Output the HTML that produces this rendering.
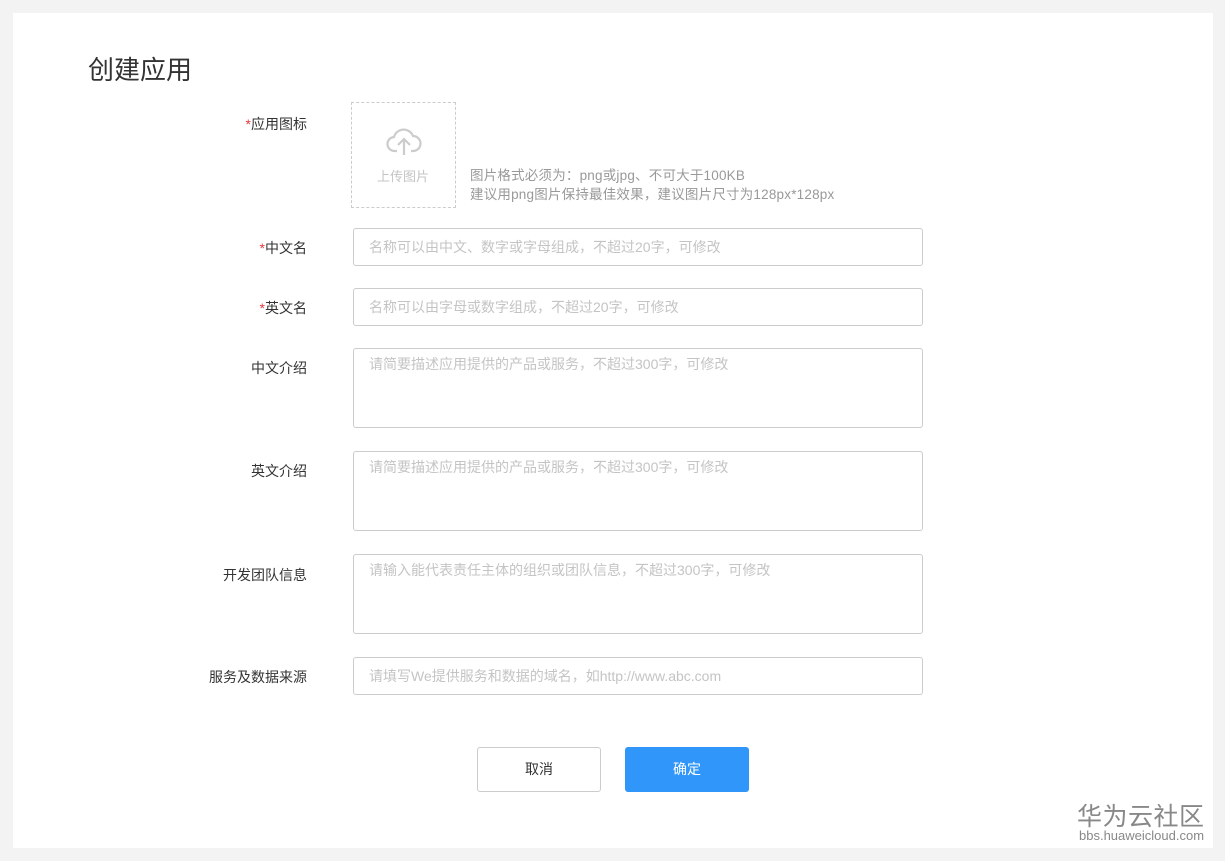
<!DOCTYPE html>
<html><head><meta charset="utf-8"><style>
*{margin:0;padding:0;box-sizing:border-box}
body{width:1225px;height:861px;background:#f3f3f3;font-family:"Liberation Sans","Noto Sans CJK SC",sans-serif;position:relative;overflow:hidden}
.card{position:absolute;left:13px;top:13px;width:1200px;height:835px;background:#fff}
.a{position:absolute}
h1{position:absolute;left:88px;top:50px;font-size:26px;font-weight:normal;color:#333}
.lbl{position:absolute;right:918px;font-size:14px;color:#333;white-space:nowrap}
.lbl i{color:#e4393c;font-style:normal}
.in{position:absolute;left:353px;width:570px;border:1px solid #ccc;border-radius:3px;font-size:14px;color:#c4c4c4;padding-left:15px}
.btn{position:absolute;top:747px;width:124px;height:45px;border-radius:3px;font-size:14px;text-align:center;line-height:45px}
</style></head><body>
<div class="card"></div>
<h1>创建应用</h1>
<div class="lbl" style="top:114px"><i>*</i>应用图标</div>
<div class="a" style="left:351px;top:102px;width:105px;height:106px;border:1px dashed #ccc"></div>
<svg class="a" style="left:386px;top:126px" width="36" height="30" viewBox="0 0 36 30"><path d="M11 25H9a7 7 0 0 1-1-14 10 10 0 0 1 19-1 7.5 7.5 0 0 1 0 15h-2" fill="none" stroke="#ccc" stroke-width="2.2"/><path d="M18 29V13M12 19l6-6 6 6" fill="none" stroke="#ccc" stroke-width="2.2"/></svg>
<div class="a" style="left:377px;top:166px;font-size:13px;color:#c4c4c4">上传图片</div>
<div class="a" style="left:470px;top:166px;font-size:13.5px;color:#999;line-height:19px;letter-spacing:0.2px">图片格式必须为：png或jpg、不可大于100KB<br>建议用png图片保持最佳效果，建议图片尺寸为128px*128px</div>
<div class="lbl" style="top:238px"><i>*</i>中文名</div>
<div class="in" style="top:228px;height:38px;line-height:36px">名称可以由中文、数字或字母组成，不超过20字，可修改</div>
<div class="lbl" style="top:298px"><i>*</i>英文名</div>
<div class="in" style="top:288px;height:38px;line-height:36px">名称可以由字母或数字组成，不超过20字，可修改</div>
<div class="lbl" style="top:358px">中文介绍</div>
<div class="in" style="top:348px;height:80px;padding-top:5px">请简要描述应用提供的产品或服务，不超过300字，可修改</div>
<div class="lbl" style="top:461px">英文介绍</div>
<div class="in" style="top:451px;height:80px;padding-top:5px">请简要描述应用提供的产品或服务，不超过300字，可修改</div>
<div class="lbl" style="top:565px">开发团队信息</div>
<div class="in" style="top:554px;height:80px;padding-top:5px">请输入能代表责任主体的组织或团队信息，不超过300字，可修改</div>
<div class="lbl" style="top:667px">服务及数据来源</div>
<div class="in" style="top:657px;height:38px;line-height:36px">请填写We提供服务和数据的域名，如http://www.abc.com</div>
<div class="btn" style="left:477px;border:1px solid #ccc;color:#333;line-height:43px">取消</div>
<div class="btn" style="left:625px;background:#3196fa;color:#fff">确定</div>
<div class="a" style="left:1077px;top:797px;font-size:25px;color:#888;letter-spacing:0.5px">华为云社区</div>
<div class="a" style="left:1079px;top:828px;font-size:13px;color:#888">bbs.huaweicloud.com</div>
</body></html>
